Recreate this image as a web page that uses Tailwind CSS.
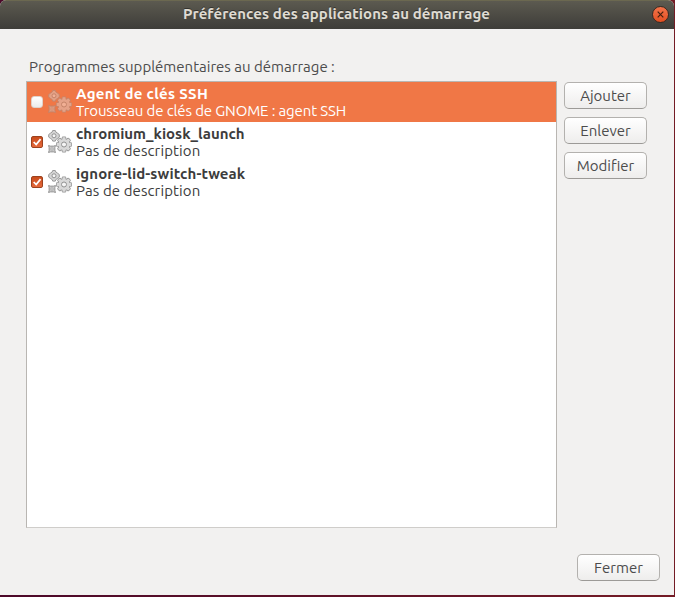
<!DOCTYPE html>
<html lang="fr">
<head>
<meta charset="utf-8">
<title>Préférences des applications au démarrage</title>
<script src="https://cdn.jsdelivr.net/npm/@tailwindcss/browser@4"></script>
</head>
<body class="w-[675px] h-[597px] overflow-hidden bg-linear-to-r from-[#4c0829] to-[#741b25] font-['Ubuntu','Noto_Sans',sans-serif] text-[15px] text-[#4c4c4c]">
<svg class="hidden">
  <defs>
    <g id="teeth">
      <rect x="-1.500" y="-7.300" width="3" height="14.600" rx=".5"/>
      <rect x="-1.500" y="-7.300" width="3" height="14.600" rx=".5" transform="rotate(45)"/>
      <rect x="-1.500" y="-7.300" width="3" height="14.600" rx=".5" transform="rotate(90)"/>
      <rect x="-1.500" y="-7.300" width="3" height="14.600" rx=".5" transform="rotate(135)"/>
      <circle r="5.600"/>
    </g>
    <symbol id="gears" viewBox="0 0 24 24">
      <g transform="translate(6 5.800)">
        <path d="M-1.3-5.300h2.600l.5 1.500 1.500 1 2 1.500v2.600l-2 1.500-1.500 1-.5 1.500h-2.600l-.5-1.500-1.500-1-2-1.500v-2.600l2-1.500 1.500-1z" fill="#d4d4d4" stroke="#999"/>
        <circle r="2" fill="#f4f4f4" stroke="#929292"/>
      </g>
      <path d="M.5 15.500l2 .6h3l2-.6-.6 2v3l.6 2-2-.6h-3l-2 .6.6-2v-3z" fill="#c8c8c8" stroke="#8f8f8f" stroke-width=".9"/>
      <path d="M3 18h2v2H3z" fill="#ddd" stroke="#999" stroke-width=".5"/>
      <g transform="translate(16 14.500)">
        <use href="#teeth" stroke="#969696" stroke-width="1.500" fill="#d8d8d8"/>
        <use href="#teeth" fill="#d8d8d8"/>
        <circle r="2.500" fill="#f4f4f4" stroke="#929292"/>
      </g>
    </symbol>
    <symbol id="check" viewBox="0 0 12 12"><path d="M2 6l3 3L10.300 2.500" fill="none" stroke="#fff" stroke-width="2.100"/></symbol>
  </defs>
</svg>
<main class="w-[674px] h-[595px] bg-[#f2f1f0] flex flex-col rounded-t-[6px] overflow-hidden">
  <header class="h-[29px] shrink-0 bg-linear-to-b from-[#5c5a50] to-[#3e3d39] border-t border-[#6b6850] flex items-center pr-[5px] pb-[2px] pl-[21px]">
    <h1 class="flex-1 text-center font-bold text-[#dfdbd2] tracking-[0.1px] whitespace-nowrap [text-shadow:0_-1px_#33322e]">Préférences des applications au démarrage</h1>
    <button aria-label="Fermer la fenêtre" class="size-[17px] rounded-full border border-[#3a2a22] bg-linear-to-b from-[#f37349] to-[#e34f20] flex items-center justify-center">
      <svg class="size-[7px]" viewBox="0 0 7 7"><path d="M.7.7l5.600 5.600M6.300.7L.7 6.300" stroke="#45200f" stroke-width="1.200"/></svg>
    </button>
  </header>
  <p class="pl-[29px] mt-[28px] h-[20px] leading-[20px] whitespace-nowrap">Programmes supplémentaires au démarrage :</p>
  <div class="flex pl-[26px] mt-[4px] gap-[7px]">
    <section class="w-[531px] h-[447px] bg-white border border-[#b9b6b2] border-b-[#cfcdca] text-[#3c3c3c]">
      <div class="h-[40px] bg-[#f07746] text-white flex items-center pl-[4px]">
        <span class="size-[12px] rounded-[3px] bg-linear-to-b from-white to-[#ececec] border border-[#e0d2ca]"></span>
        <svg class="size-[24px] ml-[5px] opacity-45"><use href="#gears"/></svg>
        <div class="ml-[4px] leading-[17px] whitespace-nowrap"><div class="font-bold tracking-[0.3px]">Agent de clés SSH</div><div class="tracking-[-0.13px]">Trousseau de clés de GNOME : agent SSH</div></div>
      </div>
      <div class="h-[40px] flex items-center pl-[4px]">
        <span class="size-[12px] rounded-[2px] bg-linear-to-b from-[#c94c1c] to-[#e5683a] border border-[#9c421f]"><svg class="size-[10px]"><use href="#check"/></svg></span>
        <svg class="size-[24px] ml-[5px]"><use href="#gears"/></svg>
        <div class="ml-[4px] leading-[17px] whitespace-nowrap"><div class="font-bold">chromium_kiosk_launch</div><div class="tracking-[0.1px]">Pas de description</div></div>
      </div>
      <div class="h-[40px] flex items-center pl-[4px]">
        <span class="size-[12px] rounded-[2px] bg-linear-to-b from-[#c94c1c] to-[#e5683a] border border-[#9c421f]"><svg class="size-[10px]"><use href="#check"/></svg></span>
        <svg class="size-[24px] ml-[5px]"><use href="#gears"/></svg>
        <div class="ml-[4px] leading-[17px] whitespace-nowrap"><div class="font-bold tracking-[0.12px]">ignore-lid-switch-tweak</div><div class="tracking-[0.1px]">Pas de description</div></div>
      </div>
    </section>
    <div class="flex flex-col gap-[8px] pt-[1px]">
      <button class="w-[83px] h-[27px] pt-[2px] rounded-[5px] border border-[#b3b1ae] border-b-[#9c9a97] bg-linear-to-b from-white to-[#eeedec]">Ajouter</button>
      <button class="w-[83px] h-[27px] pt-[2px] rounded-[5px] border border-[#b3b1ae] border-b-[#9c9a97] bg-linear-to-b from-white to-[#eeedec]">Enlever</button>
      <button class="w-[83px] h-[27px] pt-[2px] rounded-[5px] border border-[#b3b1ae] border-b-[#9c9a97] bg-linear-to-b from-white to-[#eeedec]">Modifier</button>
    </div>
  </div>
  <footer class="flex justify-end pr-[14px] mt-[26px]">
    <button class="w-[83px] h-[27px] pt-[2px] rounded-[5px] border border-[#b3b1ae] border-b-[#9c9a97] bg-linear-to-b from-white to-[#eeedec]">Fermer</button>
  </footer>
</main>
</body>
</html>
